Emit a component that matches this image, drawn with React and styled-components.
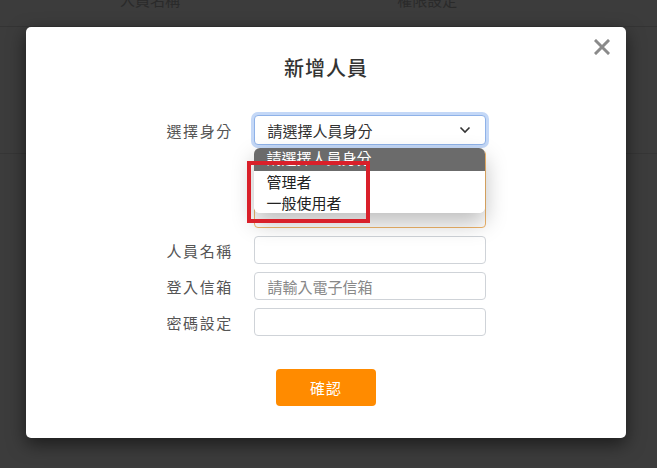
import React from "react";
import styled, { createGlobalStyle } from "styled-components";

const Global = createGlobalStyle`
  html, body { margin: 0; padding: 0; }
  body {
    width: 657px; height: 468px; overflow: hidden;
    background: #3c3c3c;
    font-family: "Noto Sans CJK TC", "Noto Sans", sans-serif;
  }
`;

const Page = styled.div`
  position: relative;
  width: 657px;
  height: 468px;
  background: #3c3c3c;
`;

const TopBar = styled.div`
  height: 26px;
  border-bottom: 1px solid #343434;
  display: flex;
  overflow: hidden;
`;

const TopCell = styled.div`
  width: ${(p) => p.$w}px;
  padding-left: ${(p) => p.$pl}px;
  margin-top: -10px;
  font-size: 15px;
  color: #2a2a2a;
  line-height: 20px;
`;

const RowLine = styled.div`
  height: 126px;
  border-bottom: 1px solid #363636;
`;

const Overlay = styled.div`
  position: absolute;
  inset: 0;
  display: flex;
  justify-content: flex-start;
  align-items: flex-start;
  padding: 27px 0 0 26px;
`;

const Modal = styled.div`
  position: relative;
  width: 600px;
  height: 411px;
  box-sizing: border-box;
  background: #fff;
  border-radius: 5px;
  box-shadow: 0 6px 18px rgba(0, 0, 0, 0.55);
  padding: 27px 0 0;
  display: flex;
  flex-direction: column;
  align-items: center;
`;

const Close = styled.button`
  position: absolute;
  top: 12px;
  right: 16px;
  width: 16px;
  height: 16px;
  padding: 0;
  border: 0;
  background: none;
  cursor: pointer;
  display: flex;
`;

const Title = styled.h2`
  margin: 0;
  font-size: 20px;
  line-height: 28px;
  font-weight: 500;
  color: #333;
  letter-spacing: 1px;
`;

const Form = styled.div`
  margin-top: 33px;
  width: 319px;
  display: flex;
  flex-direction: column;
`;

const Row = styled.div`
  display: grid;
  grid-template-columns: 87px 232px;
  align-items: center;
  margin-bottom: ${(p) => p.$mb}px;
  position: relative;
`;

const Label = styled.label`
  font-size: 15px;
  letter-spacing: 1.6px;
  color: #555;
`;

const Field = styled.div`
  box-sizing: border-box;
  height: ${(p) => p.$h || 28}px;
  border: 1px solid ${(p) => p.$border || "#cfd3d8"};
  border-radius: 4px;
  background: #fff;
  padding: 0 13px;
  display: flex;
  align-items: center;
  font-size: 15px;
  color: ${(p) => (p.$placeholder ? "#888" : "#333")};
`;

const Select = styled(Field)`
  height: 30px;
  border-color: #8fb2e8;
  box-shadow: 0 0 0 3px #c4d8f7;
  justify-content: space-between;
  color: #333;
  padding-right: 14px;
`;

const Dropdown = styled.div`
  position: absolute;
  left: 87px;
  top: -2px;
  width: 231px;
  border-radius: 6px;
  background: #fff;
  overflow: hidden;
  box-shadow: 0 10px 22px rgba(0, 0, 0, 0.26);
  z-index: 2;
`;

const Option = styled.div`
  height: ${(p) => (p.$active ? 23 : 21)}px;
  line-height: ${(p) => (p.$active ? 20 : 21)}px;
  padding-left: 13px;
  font-size: 15px;
  background: ${(p) => (p.$active ? "#6b6b6b" : "#fff")};
  color: ${(p) => (p.$active ? "#fff" : "#222")};
`;

const Highlight = styled.div`
  position: absolute;
  left: 80px;
  top: 11px;
  width: 123px;
  height: 62px;
  box-sizing: border-box;
  border: 4px solid #d9202a;
  z-index: 3;
  pointer-events: none;
`;

const Button = styled.button`
  margin-top: 33px;
  width: 100px;
  height: 37px;
  border: 0;
  border-radius: 4px;
  background: #ff8b00;
  color: #fff;
  font-family: inherit;
  font-size: 15px;
  letter-spacing: 1px;
  cursor: pointer;
`;

export default function App() {
  return (
    <>
      <Global />
      <Page>
        <TopBar>
          <TopCell $w={320} $pl={120}>人員名稱</TopCell>
          <TopCell $w={300} $pl={0}>權限設定</TopCell>
        </TopBar>
        <RowLine />
        <Overlay>
          <Modal>
            <Close aria-label="close">
              <svg width="16" height="16" viewBox="0 0 16 16">
                <path d="M2 2 L14 14 M14 2 L2 14" stroke="#8a8a8a" strokeWidth="3" strokeLinecap="square" />
              </svg>
            </Close>
            <Title>新增人員</Title>
            <Form>
              <Row $mb={5}>
                <Label>選擇身分</Label>
                <Select>
                  <span>請選擇人員身分</span>
                  <svg width="12" height="8" viewBox="0 0 12 8">
                    <path d="M1.5 1.5 L6 6 L10.5 1.5" fill="none" stroke="#333" strokeWidth="1.6" />
                  </svg>
                </Select>
              </Row>
              <Row $mb={8}>
                <span />
                <Field $h={78} $border="#f0b56a" />
                <Dropdown>
                  <Option $active>請選擇人員身分</Option>
                  <Option>管理者</Option>
                  <Option>一般使用者</Option>
                </Dropdown>
                <Highlight />
              </Row>
              <Row $mb={8}>
                <Label>人員名稱</Label>
                <Field />
              </Row>
              <Row $mb={8}>
                <Label>登入信箱</Label>
                <Field $placeholder>請輸入電子信箱</Field>
              </Row>
              <Row $mb={0}>
                <Label>密碼設定</Label>
                <Field />
              </Row>
            </Form>
            <Button>確認</Button>
          </Modal>
        </Overlay>
      </Page>
    </>
  );
}
